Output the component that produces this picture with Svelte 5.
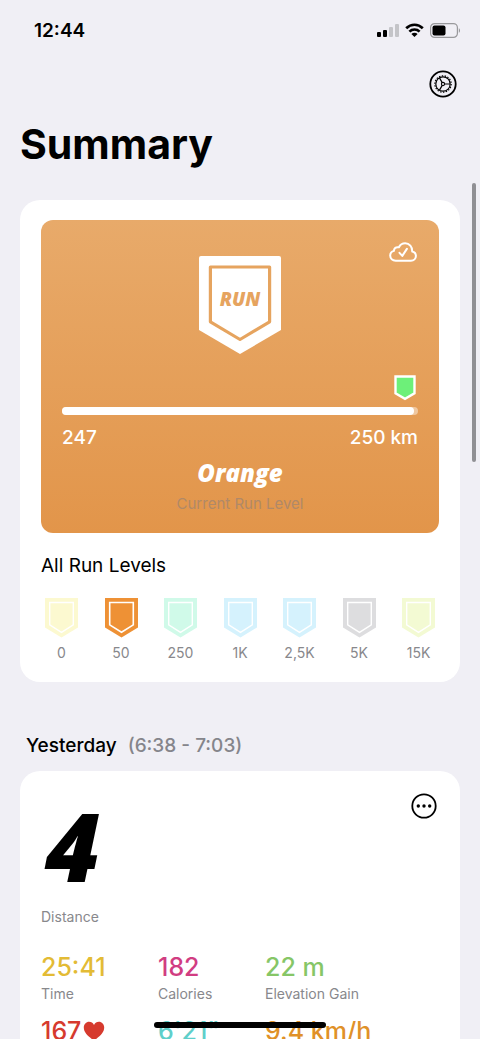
<script>
  const levels = [
    { label: "0", color: "#fcf9d0" },
    { label: "50", color: "#ee9135", active: true },
    { label: "250", color: "#d0fae9" },
    { label: "1K", color: "#d5f2fd" },
    { label: "2,5K", color: "#d5f2fd" },
    { label: "5K", color: "#dddddf" },
    { label: "15K", color: "#f3fad3" },
  ];

  const current = 247;
  const goal = 250;

  const stats = [
    { value: "25:41", label: "Time", color: "#e3bb35" },
    { value: "182", label: "Calories", color: "#d13d82" },
    { value: "22 m", label: "Elevation Gain", color: "#86c667" },
    { value: "167", color: "#d63a2e", heart: true },
    { value: "6'21\"", color: "#5fcfca" },
    { value: "9.4 km/h", color: "#e09128" },
  ];
</script>

<div class="screen">
  <div class="status">
    <span class="clock">12:44</span>
    <div class="status-icons">
      <svg width="22" height="14" viewBox="0 0 22 14">
        <rect x="0" y="9" width="4" height="5" rx="1" />
        <rect x="6" y="7" width="4" height="7" rx="1" />
        <rect x="12" y="4" width="4" height="10" rx="1" fill="#c4c4c8" />
        <rect x="18" y="1" width="4" height="13" rx="1" fill="#c4c4c8" />
      </svg>
      <svg width="19" height="14" viewBox="0 0 19 14">
        <path
          d="M1.2 5.2C6 .6 13 .6 17.8 5.2M4.4 8.6c2.8-2.8 7.4-2.8 10.2 0"
          fill="none"
          stroke="#000"
          stroke-width="2.7"
        />
        <path d="M6.4 10.9c1.8-1.6 4.4-1.6 6.2 0L9.5 14z" />
      </svg>
      <svg width="30" height="15" viewBox="0 0 30 15">
        <rect
          x=".6"
          y=".6"
          width="26.8"
          height="13.8"
          rx="4"
          fill="none"
          stroke="#99999c"
          stroke-width="1.2"
        />
        <rect x="2.5" y="2.5" width="13" height="10" rx="2" />
        <path d="M28.8 5.2c1.6.7 1.6 3.9 0 4.6z" fill="#99999c" />
      </svg>
    </div>
  </div>

  <div class="toolbar">
    <button aria-label="Settings">
      <svg width="28" height="28" viewBox="0 0 28 28" fill="none" stroke="#000">
        <circle cx="14" cy="14" r="12.7" stroke-width="1.8" />
        <circle cx="14" cy="14" r="7.2" stroke-width="1.2" />
        <circle
          cx="14"
          cy="14"
          r="8.2"
          stroke-width="1.2"
          stroke-dasharray="1.4 1.46"
        />
        <circle cx="14" cy="14" r="1.6" stroke-width="1.1" />
        <path d="M15.6 14H21M13.2 12.6l-2.7-4.7M13.2 15.4l-2.7 4.7" stroke-width="1.2" />
      </svg>
    </button>
  </div>

  <h1>Summary</h1>

  <section class="card">
    <div class="hero">
      <svg class="cloud" width="28" height="20" viewBox="0 0 28 20">
        <path
          d="M6.7 18.7h15.2c3 0 5-2 5-4.7 0-2.4-1.4-4.1-3.7-4.5.2-4.5-2.8-8.2-7-8.2-3 0-5.1 1.5-6.3 4-3-.7-5 1-5 3.6-2.3.6-3.7 2.3-3.7 4.7 0 3 2.3 5.1 5.5 5.1z"
        />
        <path d="M10.5 10.8l2.8 3.1 4.6-7" />
      </svg>

      <div class="badge">
        <svg width="82" height="98" viewBox="0 0 82 98">
          <path
            d="M2 0h78q2 0 2 2v72L41 98 0 74V2q0-2 2-2z"
            fill="#fff"
          />
          <path
            d="M11.4 11h59.2v54.8L41 83.5 11.4 65.8z"
            fill="none"
            stroke="#e6a45f"
            stroke-width="3.2"
            stroke-linejoin="round"
          />
        </svg>
        <span>RUN</span>
      </div>

      <svg class="next" width="22" height="26" viewBox="0 0 22 26">
        <path
          d="M1.5 1.5h19v16.8L11 23.8 1.5 18.3z"
          fill="#6df079"
          stroke="#fff"
          stroke-width="2.4"
        />
      </svg>

      <div class="track">
        <div class="bar" style="width: {(current / goal) * 100}%"></div>
      </div>
      <div class="range">
        <span>{current}</span>
        <span>{goal} km</span>
      </div>
      <p class="level-name">Orange</p>
      <p class="level-note">Current Run Level</p>
    </div>

    <h2>All Run Levels</h2>
    <ul class="levels">
      {#each levels as { label, color, active }}
        <li>
          <svg width="33" height="40" viewBox="0 0 33 40">
            <path d="M0 0h33v29.5L16.5 39.5 0 29.5z" fill={color} />
            <path
              d="M4.7 4.5h23.6v22.4L16.5 34.3 4.7 26.9z"
              fill="none"
              stroke="#fff"
              stroke-width={active ? 1.6 : 1.4}
            />
          </svg>
          <span>{label}</span>
        </li>
      {/each}
    </ul>
  </section>

  <h3>Yesterday <span>(6:38 - 7:03)</span></h3>

  <section class="card">
    <div class="run-head">
      <p class="distance">4</p>
      <button aria-label="More">
        <svg width="26" height="26" viewBox="0 0 26 26">
          <circle cx="13" cy="13" r="11.7" fill="none" stroke="#000" stroke-width="1.8" />
          <circle cx="7.3" cy="13" r="1.7" />
          <circle cx="13" cy="13" r="1.7" />
          <circle cx="18.7" cy="13" r="1.7" />
        </svg>
      </button>
    </div>
    <p class="caption">Distance</p>

    <div class="stats">
      {#each stats as { value, label, color, heart }}
        <div>
          <p class="value" style="color: {color}">
            {value}{#if heart}<svg width="22" height="20" viewBox="0 0 22 20">
                <path
                  d="M11 19.5C5 15.5.8 11.6.8 6.6.8 3.2 3.2.8 6.1.8c2.1 0 3.9 1.2 4.9 3.1C12 2 13.8.8 15.9.8c2.9 0 5.3 2.4 5.3 5.8 0 5-4.2 8.9-10.2 12.9z"
                  fill="currentColor"
                />
              </svg>{/if}
          </p>
          {#if label}
            <p class="caption">{label}</p>
          {/if}
        </div>
      {/each}
    </div>
  </section>

  <div class="scroll-thumb"></div>
  <div class="home-indicator"></div>
</div>

<style>
  :global(body) {
    background-color: #f0eff5;
  }

  .screen {
    position: relative;
    box-sizing: border-box;
    height: 100vh;
    overflow: hidden;
    padding: 0 20px;
    font-family: Inter, "Liberation Sans", sans-serif;
    color: #000;
  }

  h1,
  h2,
  h3,
  p,
  ul {
    margin: 0;
    padding: 0;
  }

  svg {
    display: block;
  }

  button {
    padding: 0;
    border: none;
    background: none;
    cursor: pointer;
  }

  .status {
    display: flex;
    justify-content: space-between;
    align-items: center;
    height: 60px;
    padding-left: 14px;
  }

  .clock {
    font-size: 19px;
    font-weight: 600;
  }

  .status-icons {
    display: flex;
    align-items: center;
    gap: 6px;
  }

  .toolbar {
    display: flex;
    justify-content: flex-end;
    padding: 10px 3px 0 0;
  }

  h1 {
    margin: 20px 0 30px;
    font-size: 41px;
    line-height: 52px;
    font-weight: 700;
  }

  .card {
    padding: 20px 21px;
    border-radius: 20px;
    background-color: #fff;
  }

  .hero {
    position: relative;
    display: flex;
    flex-direction: column;
    align-items: center;
    padding: 36px 21px 19px;
    border-radius: 12px;
    background: linear-gradient(#e8aa6a, #e2954a);
    color: #fff;
  }

  .cloud {
    position: absolute;
    top: 22px;
    right: 22px;
    fill: none;
    stroke: #fff;
    stroke-width: 2;
    stroke-linecap: round;
    stroke-linejoin: round;
  }

  .badge {
    position: relative;
  }

  .badge span {
    position: absolute;
    top: 30px;
    left: 0;
    width: 100%;
    font-family: "Open Sans", sans-serif;
    font-size: 19px;
    line-height: 26px;
    font-weight: 800;
    font-style: italic;
    text-align: center;
    color: #e6a45f;
  }

  .next {
    align-self: flex-end;
    margin: 21px 2px 6px 0;
  }

  .track {
    width: 100%;
    height: 8px;
    border-radius: 4px;
    background-color: #f0c8a0;
  }

  .bar {
    height: 100%;
    border-radius: 4px;
    background-color: #fff;
  }

  .range {
    display: flex;
    justify-content: space-between;
    width: 100%;
    margin-top: 11px;
    font-size: 19px;
    line-height: 24px;
    font-weight: 500;
  }

  .level-name {
    margin-top: 6px;
    font-family: "Open Sans", sans-serif;
    font-size: 24px;
    line-height: 34px;
    font-weight: 800;
    font-style: italic;
  }

  .level-note {
    margin-top: 4px;
    font-size: 15px;
    line-height: 20px;
    color: #b08968;
  }

  h2 {
    margin: 21px 0 20px;
    font-size: 19px;
    line-height: 24px;
    font-weight: 400;
  }

  .levels {
    display: flex;
    justify-content: space-between;
    list-style: none;
  }

  .levels li {
    display: flex;
    flex-direction: column;
    align-items: center;
    gap: 6px;
    width: 41px;
    font-size: 14px;
    line-height: 18px;
    color: #88888c;
  }

  h3 {
    margin: 52px 6px 13px;
    font-size: 19px;
    line-height: 24px;
    font-weight: 500;
  }

  h3 span {
    margin-left: 6px;
    color: #85858b;
  }

  .run-head {
    display: flex;
    justify-content: space-between;
    align-items: flex-start;
    margin-bottom: 8px;
  }

  .run-head button {
    margin: 2px 2px 0 0;
  }

  .distance {
    padding-left: 4px;
    font-family: "Open Sans", sans-serif;
    font-size: 95px;
    line-height: 108px;
    font-weight: 800;
    font-style: italic;
  }

  .caption {
    font-size: 14px;
    line-height: 20px;
    color: #88888c;
  }

  .stats {
    display: grid;
    grid-template-columns: 117px 107px 1fr;
    row-gap: 10px;
    margin-top: 23px;
  }

  .value {
    display: flex;
    align-items: center;
    gap: 2px;
    font-size: 25px;
    line-height: 34px;
    font-weight: 500;
  }

  .scroll-thumb {
    position: absolute;
    top: 183px;
    right: 4px;
    width: 4px;
    height: 279px;
    border-radius: 2px;
    background-color: #909094;
  }

  .home-indicator {
    position: absolute;
    bottom: 11px;
    left: 50%;
    width: 172px;
    height: 6px;
    margin-left: -86px;
    border-radius: 3px;
    background-color: #000;
  }
</style>
